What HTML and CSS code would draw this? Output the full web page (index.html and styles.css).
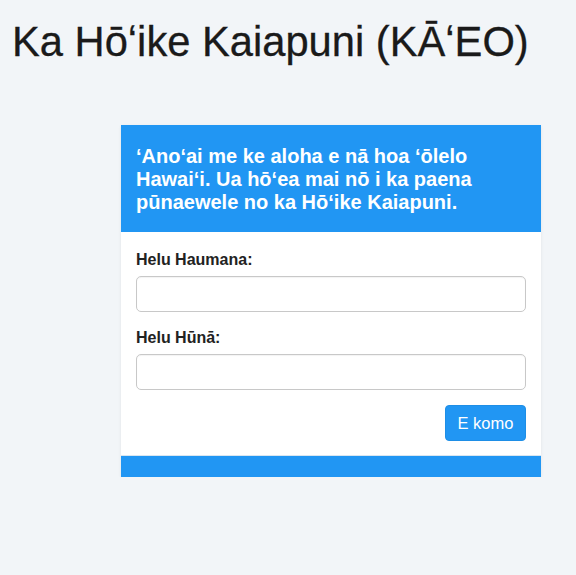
FILE: index.html
```html
<!DOCTYPE html>
<html lang="haw">
<head>
<meta charset="utf-8">
<title>Ka Hōʻike Kaiapuni (KĀʻEO)</title>
<link rel="stylesheet" href="styles.css">
</head>
<body>
<h1 class="title">Ka Hōʻike Kaiapuni (KĀʻEO)</h1>
<div class="card">
  <div class="card-head">
    <h3 class="card-title">ʻAnoʻai me ke aloha e nā hoa ʻōlelo Hawaiʻi. Ua hōʻea mai nō i ka paena pūnaewele no ka Hōʻike Kaiapuni.</h3>
  </div>
  <form class="card-body">
    <div class="group">
      <label class="label" for="haumana">Helu Haumana:</label>
      <input class="field" id="haumana" type="text">
    </div>
    <div class="group">
      <label class="label" for="huna">Helu Hūnā:</label>
      <input class="field" id="huna" type="password">
    </div>
    <div class="actions">
      <button class="btn" type="button">E komo</button>
    </div>
  </form>
  <div class="card-foot"></div>
</div>
</body>
</html>
```
FILE: styles.css
```css
* { box-sizing: border-box; }
html, body {
  margin: 0;
  padding: 0;
  background: #f2f5f8;
  font-family: "Liberation Sans", Arial, Helvetica, sans-serif;
  color: #333;
}
.title {
  margin: 18px 0 0 12px;
  font-size: 41.7px;
  line-height: 47px;
  font-weight: normal;
  color: #1a1a1a;
  -webkit-text-stroke: 0.3px #1a1a1a;
}
.card {
  margin: 60px 0 0 121px;
  width: 420px;
  background: #fff;
  box-shadow: 0 1px 3px rgba(0,0,0,0.08);
}
.card-head {
  background: #2196f3;
  padding: 20px 15px 18px 15px;
}
.card-title {
  margin: 0;
  color: #fff;
  font-size: 20px;
  line-height: 23px;
  font-weight: bold;
}
.card-body {
  margin: 0;
  padding: 19px 15px 14px 15px;
  display: flex;
  flex-direction: column;
  gap: 17px;
}
.group {
  display: flex;
  flex-direction: column;
  gap: 7px;
}
.label {
  font-size: 16px;
  line-height: 18px;
  font-weight: bold;
  color: #222;
}
.field {
  width: 390px;
  height: 36px;
  border: 1px solid #c8c8c8;
  border-radius: 5px;
  background: #fff;
  font-family: inherit;
  font-size: 16px;
  padding: 6px 12px;
  box-shadow: inset 0 1px 1px rgba(0,0,0,0.05);
}
.actions {
  display: flex;
  justify-content: flex-end;
  margin-top: -2px;
}
.btn {
  height: 36px;
  width: 81px;
  padding: 0;
  background: #2196f3;
  color: #fff;
  border: 1px solid #1e8ee6;
  border-radius: 4px;
  font-family: inherit;
  font-size: 16.5px;
}
.card-foot {
  height: 22px;
  background: #2196f3;
  border-top: 1px solid #d9e6f0;
}
```
